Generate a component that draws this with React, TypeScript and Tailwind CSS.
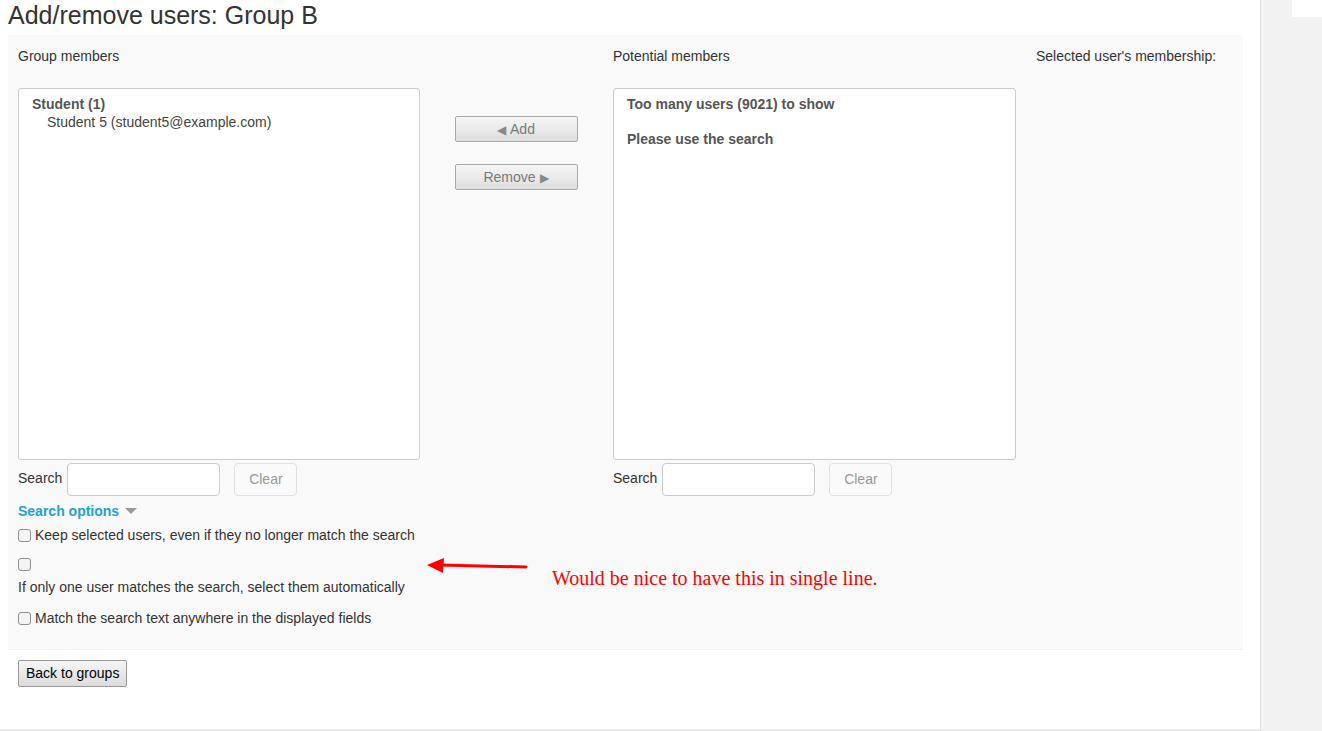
import React from "react"

// Moodle-style "Add/remove users" page with an annotation overlay

const font = { fontFamily: '"Liberation Sans", Arial, sans-serif' }

function Checkbox() {
  return (
    <span className="inline-block w-[13px] h-[13px] rounded-[3px] border border-[#8f8f8f] bg-[#f4f4f4] shrink-0" />
  )
}

function SearchRow() {
  return (
    <div className="flex items-center h-[33px] mt-[3px]">
      <span className="text-[14px] text-[#333] mr-[5px] -mt-[2px]">Search</span>
      <input
        className="w-[153px] h-[33px] border border-[#ccc] rounded-[4px] bg-white outline-none"
        type="text"
      />
      <button className="ml-[14px] w-[63px] h-[33px] border border-[#e0e0e0] rounded-[4px] bg-[#fafafa] text-[14px] text-[#999]">
        Clear
      </button>
    </div>
  )
}

function MoveButton({ children }: { children: React.ReactNode }) {
  return (
    <button className="w-[123px] h-[26px] border border-[#a9a9a9] rounded-[2px] bg-gradient-to-b from-[#f6f6f6] to-[#dedede] text-[14px] text-[#7a7a7a]">
      {children}
    </button>
  )
}

export default function App() {
  return (
    <div className="w-[1322px] h-[731px] flex bg-white overflow-hidden" style={font}>
      <div className="w-[1260px] h-[731px] relative border-b-2 border-[#ebebeb]">
        <div className="pl-[8px]">
          <h2 className="text-[25px] leading-[30px] text-[#333] h-[35px]">
            Add/remove users: Group B
          </h2>

          {/* main panel */}
          <div className="w-[1235px] bg-[#f9f9f9] pl-[10px] pt-[11px] pb-[21px] border-b border-[#f0f0f0]">
            <div className="flex">
              {/* group members */}
              <div className="w-[402px]">
                <div className="text-[14px] leading-[20px] text-[#333]">Group members</div>
                <div className="mt-[22px] h-[372px] bg-white border border-[#ccc] rounded-[3px] pt-[6px] pl-[13px] text-[14px] leading-[18px] text-[#555]">
                  <div className="font-bold">Student (1)</div>
                  <div className="pl-[15px] text-[#444]">Student 5 (student5@example.com)</div>
                </div>
                <SearchRow />
              </div>

              {/* add / remove */}
              <div className="w-[193px] flex flex-col items-center pt-[70px] gap-[22px] pr-[6px] pl-[5px]">
                <MoveButton>
                  <span className="text-[12px] mr-[4px] text-[#888]">◀</span>Add
                </MoveButton>
                <MoveButton>
                  Remove<span className="text-[12px] ml-[4px] text-[#888]">▶</span>
                </MoveButton>
              </div>

              {/* potential members */}
              <div className="w-[403px]">
                <div className="text-[14px] leading-[20px] text-[#333]">Potential members</div>
                <div className="mt-[22px] h-[372px] bg-white border border-[#ccc] rounded-[3px] pt-[6px] pl-[13px] text-[14px] leading-[18px] text-[#555] font-bold">
                  <div>Too many users (9021) to show</div>
                  <div className="mt-[17px]">Please use the search</div>
                </div>
                <SearchRow />
              </div>

              <div className="pl-[20px]">
                <div className="text-[14px] leading-[20px] text-[#333]">Selected user's membership:</div>
              </div>
            </div>

            {/* search options */}
            <div className="mt-[5px] flex items-center text-[14px] leading-[20px] font-bold text-[#1aa3d8]">
              Search options
              <span className="ml-[6px] w-0 h-0 border-l-[6px] border-r-[6px] border-t-[6px] border-l-transparent border-r-transparent border-t-[#999]" />
            </div>
            <div className="mt-[4px] flex items-center gap-[4px] text-[14px] leading-[20px] text-[#333]">
              <Checkbox />
              <span>Keep selected users, even if they no longer match the search</span>
            </div>
            <div className="mt-[9px] text-[14px] leading-[20px] text-[#333]">
              <div className="h-[20px] flex items-center">
                <Checkbox />
              </div>
              <div className="mt-[3px]">If only one user matches the search, select them automatically</div>
            </div>
            <div className="mt-[11px] flex items-center gap-[4px] text-[14px] leading-[20px] text-[#333]">
              <Checkbox />
              <span>Match the search text anywhere in the displayed fields</span>
            </div>
          </div>

          <div className="pl-[10px] pt-[10px]">
            <button className="h-[27px] px-[7px] border border-[#999] rounded-[2px] bg-gradient-to-b from-[#f5f5f5] to-[#dcdcdc] text-[14px] text-black">
              Back to groups
            </button>
          </div>
        </div>

        {/* annotation overlay */}
        <svg className="absolute left-[426px] top-[556px]" width="104" height="20" viewBox="0 0 104 20">
          <line x1="100" y1="11" x2="14" y2="9" stroke="#ff0000" strokeWidth="3" strokeLinecap="round" />
          <polygon points="1,9 18,2 17,17" fill="#ff0000" />
        </svg>
        <div
          className="absolute left-[552px] top-[565px] text-[20px] leading-[26px] text-[#ff0000]"
          style={{ fontFamily: '"Liberation Serif", "Times New Roman", serif' }}
        >
          Would be nice to have this in single line.
        </div>
      </div>

      {/* right drawer strip */}
      <div className="flex-1 h-[731px] bg-[#f2f2f2] border-l border-[#e3e3e3] flex justify-end">
        <div className="w-[30px] h-[17px] bg-white" />
      </div>
    </div>
  )
}
